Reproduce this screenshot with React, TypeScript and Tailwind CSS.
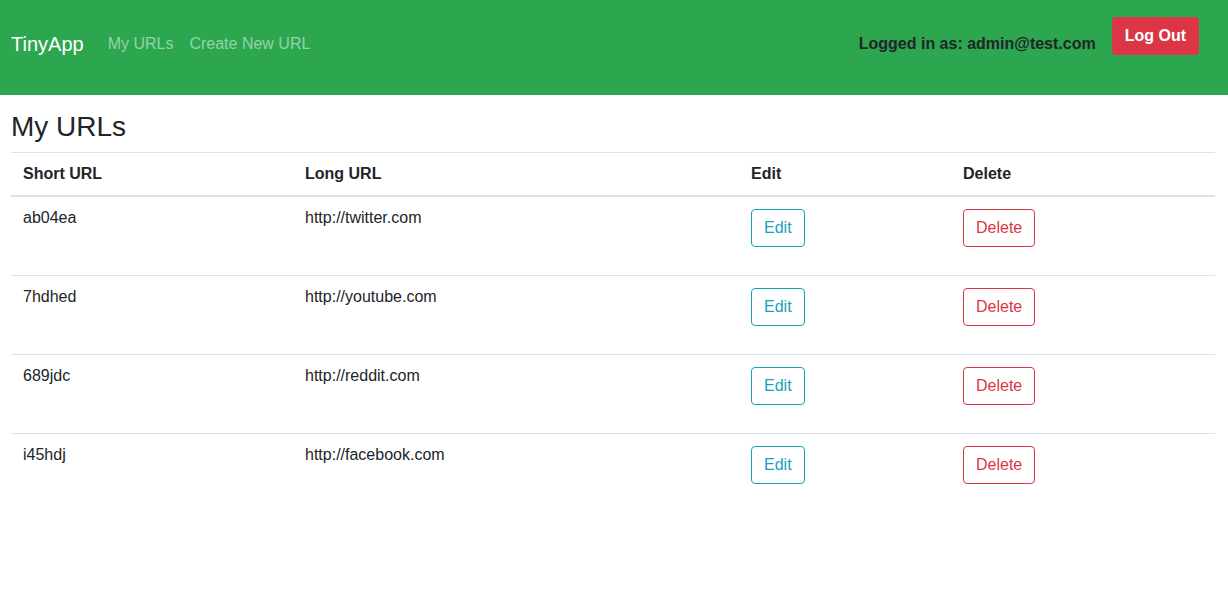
const urls = [
  { short: 'ab04ea', long: 'http://twitter.com' },
  { short: '7hdhed', long: 'http://youtube.com' },
  { short: '689jdc', long: 'http://reddit.com' },
  { short: 'i45hdj', long: 'http://facebook.com' },
];

const App = () => {
  return (
    <div className="min-h-[615px] bg-white font-['Liberation_Sans',Arial,sans-serif] text-base leading-6 text-[#212529]">
      <nav className="flex h-[95px] items-center justify-between bg-[#2ca64f] pb-2 pl-[11px] pr-[29px]">
        <div className="flex items-center">
          <a href="#" className="mr-4 text-[20px] leading-[30px] text-white">
            TinyApp
          </a>
          <a href="#" className="px-2 text-[rgba(255,255,255,0.5)]">
            My URLs
          </a>
          <a href="#" className="px-2 text-[rgba(255,255,255,0.5)]">
            Create New URL
          </a>
        </div>
        <div className="flex items-center gap-[16px]">
          <span className="font-bold">Logged in as: admin@test.com</span>
          <form className="mb-4" onSubmit={(e) => e.preventDefault()}>
            <button className="h-[38px] rounded-[4px] bg-[#dc3545] px-[13px] font-bold text-white">
              Log Out
            </button>
          </form>
        </div>
      </nav>

      <main className="pl-[11px] pr-[13px] pt-[15px]">
        <h3 className="mb-2 text-[28px] leading-[1.2]">My URLs</h3>
        <table className="w-[1204px] table-fixed border-collapse text-left">
          <colgroup>
            <col className="w-[282px]" />
            <col className="w-[446px]" />
            <col className="w-[212px]" />
            <col className="w-[264px]" />
          </colgroup>
          <thead>
            <tr className="border-t border-b-2 border-[#dee2e6]">
              <th className="px-3 py-[9px] font-bold">Short URL</th>
              <th className="px-3 py-[9px] font-bold">Long URL</th>
              <th className="px-3 py-[9px] font-bold">Edit</th>
              <th className="px-3 py-[9px] font-bold">Delete</th>
            </tr>
          </thead>
          <tbody>
            {urls.map((u, i) => (
              <tr key={u.short} className={i > 0 ? 'border-t border-[#dee2e6]' : ''}>
                <td className="px-3 pt-[9px] align-top">{u.short}</td>
                <td className="px-3 pt-[9px] align-top">{u.long}</td>
                <td className="p-3 align-top">
                  <form className="mb-4" onSubmit={(e) => e.preventDefault()}>
                    <button className="h-[38px] rounded-[4px] border border-[#17a2b8] px-3 text-[#17a2b8]">
                      Edit
                    </button>
                  </form>
                </td>
                <td className="p-3 align-top">
                  <form className="mb-4" onSubmit={(e) => e.preventDefault()}>
                    <button className="h-[38px] rounded-[4px] border border-[#dc3545] px-3 text-[#dc3545]">
                      Delete
                    </button>
                  </form>
                </td>
              </tr>
            ))}
          </tbody>
        </table>
      </main>
    </div>
  );
};

export default App;
